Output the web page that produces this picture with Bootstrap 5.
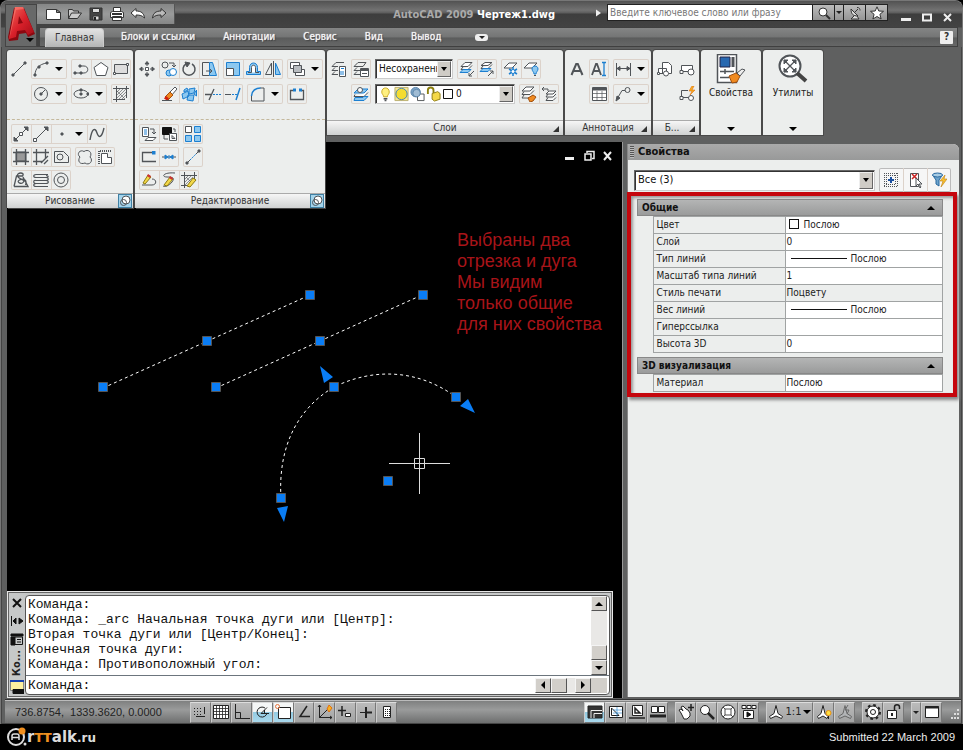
<!DOCTYPE html>
<html lang="ru">
<head>
<meta charset="utf-8">
<meta name="viewport" content="width=device-width, initial-scale=1">
<title>AutoCAD 2009 Чертеж1.dwg</title>
<link href="https://cdn.jsdelivr.net/npm/bootstrap@5.3.0/dist/css/bootstrap.min.css" rel="stylesheet">
<style>
:root{--ui:"DejaVu Sans Condensed","DejaVu Sans",sans-serif;--edge:#3c3c3c;--paper:#eceeed}
body{background:#000;font:10px/14px var(--ui);color:#222}
button{color:inherit;font:inherit;padding:0;border:0;background:none}
svg{display:block;flex:none}
.ic{width:16px;height:16px;fill:none;stroke:#505458;stroke-width:1}
.ic .b{stroke:#1c7fd0}.ic .bf{fill:#8cc8f0;stroke:#1c7fd0}.ic .d{fill:#505458}.ic .w{fill:#fff}.ic .g{fill:#b8bcc0}.ic .o{fill:#f08a20;stroke:#a05010}.ic .y{fill:#f4d848;stroke:#8c7a10}.ic .k{fill:#111;stroke:#111}
.caret{width:0;height:0;border:4px solid transparent;border-top:4px solid #000;border-bottom:0;display:block}
.caret-up{border-top:0;border-bottom:4px solid #000}
.app-window{background:#5f6060;border-radius:8px 8px 0 0;border:1px solid #777;border-bottom:0;box-shadow:inset 0 0 0 1px #444}
.app-head{background:linear-gradient(#525252,#727272 20%,#5c5c5c 12px,#3d3d3d 13px,#434343 26px,#5f6060 27px);padding:3px 4px 0;border-radius:7px 7px 0 0}
.app-button{width:32px;height:43px;background:#686969;border:1px solid #444;position:relative}
.app-button .caret{position:absolute;right:2px;bottom:4px}
.title-row{height:23px}
.quick{background:linear-gradient(#858686,#9a9b9b 50%,#858686);height:20px;padding:0 7px 0 9px;gap:5px;border-right:1px solid #555}
.quick .ic{stroke:#333}
.doc-title{font-weight:bold;color:#aaa;font-size:11px}
.doc-title b{color:#fff}
.search{border:1px solid #222;height:17px}
.search input{width:204px;border:0;height:15px;padding:0 2px;font:10px/14px var(--ui);border-radius:0;background:#fff;outline-offset:-1px}
.search input::placeholder{color:#777;opacity:1}
.search button{background:linear-gradient(#bbb,#959595);border-left:1px solid #222;width:22px;height:15px;display:grid;place-items:center}
.search button.slim{width:9px}
.search .ic{width:14px;height:14px;stroke:#333}
.win-btns{gap:7px;padding:0 3px 0 11px}
.win-btns .ic{width:14px;height:14px;stroke:#eee;stroke-width:2}
.tab-row{height:20px;background:linear-gradient(#848585,#747575 50%,#5b5c5c 55%,#666767);border:1px solid #404040;border-left-width:3px;padding:0 4px 0 5px}
.tab-row .nav-link{color:#f4f4f4;font:10px/18px var(--ui);padding:0 14px;text-shadow:0 0 1px #fff,1px 1px 1px #333}
.tab-row .nav-link.active{color:#333;background:linear-gradient(#e2e2e2,#b4b5b5);border-radius:4px 4px 0 0;padding:0 9px;text-shadow:none;margin-right:3px;border:1px solid #ccc;border-bottom:0}
.pill{width:13px;height:7px;background:#eee;border-radius:3px;margin-left:20px;display:grid;place-items:center}
.pill .caret,.slim .caret{border-width:3px 3px 0;border-top-color:#222}
.help{width:13px;height:13px;background:#eee;color:#333;font-weight:bold;line-height:12px;border-radius:1px}
.ribbon{padding:3px 6px 7px;gap:2px}
.panel{background:var(--paper);border-radius:3px 3px 0 0;position:relative;min-height:85px;box-shadow:0 0 0 1px #4a4a4a}
.panel-body{padding:9px 2px 0 4px;display:flex;flex-direction:column;gap:5px}
.trow{display:flex;gap:4px}
.trow.ind{padding-left:20px}
.tgroup{display:flex;box-shadow:inset 0 0 0 1px #dcd2ca;border-radius:2px}
.tool{width:20px;height:20px;display:grid;place-items:center;flex:none}
.tool.plain{width:16px}
.tool.more{width:16px}
.tgroup .tool+.tool:not(.more){box-shadow:inset 1px 0 #dcd2ca}
.panel-title{height:15px;border-top:1px solid #aaa;background:linear-gradient(#f6f6f6,#cfd1d1);display:flex;align-items:center;justify-content:center;color:#333;position:relative}
.corner{position:absolute;right:4px;bottom:3px;width:0;height:0;border:3px solid #333;border-left-color:transparent;border-top-color:transparent}
.flyout{position:absolute;top:69px;left:0;right:0;background:var(--paper);z-index:5;box-shadow:1px 1px 0 #444,-1px 0 0 #4a4a4a}
.flyout .panel-body{padding-top:4px;padding-bottom:3px;gap:3px;border-top:1px dashed #c4b89c}
.pin{position:absolute;right:1px;top:0;width:14px;height:14px;background:#a4d4ec;border:1px solid #3f80a4}
.pin .ic{width:12px;height:12px}
.wide-layers{width:236px}
.wide-blocks{width:46px}
.big{width:60px;color:#222}
.big .ic{width:32px;height:32px}
.combo{display:flex;align-items:center;background:#fff;border:1px solid #666;border-right-color:#ccc;border-bottom-color:#ccc;height:20px;padding:1px;box-shadow:inset 1px 1px #333}
.combo select{appearance:none;border:0;background:none;flex:1;min-width:0;font:10px/14px var(--ui);color:#111;padding:0 0 0 2px;outline-offset:-1px}
.drop{width:14px;align-self:stretch;background:#cfccc6;border:1px solid;border-color:#eee #666 #666 #eee;display:grid;place-items:center;flex:none}
.drop .caret{border-width:4px 3px 0}
.combo-a{width:78px}.combo-b{width:140px}
.combo-b .ic{margin-left:1px;width:15px}
.combo-b .ic.sq{width:12px}
.work{padding:0 3px 0 6px;min-height:0}
.drawing{background:#000;border-right:1px solid #999}
.canvas{min-height:300px;overflow:hidden;position:relative}
.sheet{position:absolute;inset:0;width:100%;height:100%}
.note{position:absolute;left:450px;top:88px;font:18px/21px "Liberation Sans",Arial,sans-serif;color:#a81419}
.doc-btns{position:absolute;right:7px;top:7px;gap:5px;display:flex}
.doc-btns .ic{width:14px;height:14px;stroke:#eee;stroke-width:2}
.command{background:#c6c8c8;border:1px solid #e8e8e8;box-shadow:inset 0 0 0 1px #666;margin-right:9px;padding:3px 2px 2px 2px;height:107px}
.cmd-side{width:14px;gap:4px;padding:1px 0}
.cmd-side .ic{width:14px;height:14px;stroke:#111}
.cmd-side span{writing-mode:vertical-rl;transform:rotate(180deg);font-weight:bold;font-size:11px;line-height:14px}
.cmd-pane{background:#fff;border:1px solid #555;border-radius:4px;margin-left:1px;overflow:hidden}
.cmd-log,.cmd-line{font:13px/15px "Liberation Mono","Courier New",monospace;color:#111}
.cmd-log{padding:1px 2px 0;white-space:pre-wrap;flex:1;margin:0;overflow:hidden}
.cmd-line label{padding-left:2px}
.cmd-line input{border:0;min-width:0;flex:1;height:18px;padding:0;outline-offset:-1px}
.cmd-end{margin-right:2px}
.sb{width:16px;height:15px;background:#d2cfca;border:1px solid;border-color:#f4f4f4 #555 #555 #f4f4f4;display:grid;place-items:center;flex:none}
.track{background:#e9e8e6}
.sb .l{transform:rotate(90deg)}.sb .r{transform:rotate(-90deg)}
.side{flex:0 0 332px;background:var(--paper);border-radius:0 6px 0 0;margin:2px 0 1px 4px;border-left:1px solid #888}
.side-title{height:16px;background:linear-gradient(#aaa,#989999);border-radius:0 6px 0 0;font-size:11px;font-weight:bold;color:#111;gap:4px;padding-left:2px}
.grab{width:4px;height:12px;background:repeating-linear-gradient(#555 0 1px,#bbb 1px 2px)}
.picker{padding:8px 8px 0 6px;gap:4px}
.picker .combo{flex:1;height:21px}
.picker select{font-size:11px}
.picker .tgroup{background:#f6f6f6;box-shadow:inset 0 0 0 1px #bbb}
.picker .tool{width:24px;height:24px}
.framed{border:4px solid #c5060d;margin:0 2px 0 -1px;padding:3px 10px 1px 6px;box-shadow:2px 3px 3px #888,inset 2px 2px 3px #999}
.grp{width:100%;height:17px;background:linear-gradient(#b4b5b5,#9a9b9b);border:1px solid #888;font-weight:bold;color:#111;display:flex;align-items:center;justify-content:space-between;padding:0 7px 0 4px}
.props{width:100%;border-collapse:collapse;table-layout:fixed;margin-bottom:4px}
.props:last-child{margin-bottom:0}
.props th,.props td{height:17px;padding:0 3px;border:1px solid #a0a3a3;font-weight:normal;line-height:14px;white-space:nowrap;vertical-align:middle}
.props .gut{border:0;width:16px;padding:0}
.props th{width:132px;color:#222}
.props td:not(.gut):not(.ro){background:#fff}
.props td:last-child{padding:0 1px}
.sw{display:inline-block;width:10px;height:10px;border:1px solid #111;background:#fff;margin:0 5px 0 2px;vertical-align:-1px}
.ln{display:inline-block;width:56px;border-top:1px solid #111;margin:0 4px;vertical-align:3px}
.status{height:24px;background:linear-gradient(#7f8080,#9a9b9b 40%,#6d6e6e);border-top:1px solid #bbb;border-bottom:1px solid #444;box-shadow:0 -1px #333;margin:2px 1px 0 4px}
.coords{font:11px/20px "Liberation Sans",Arial,sans-serif;color:#222;width:185px;padding-left:10px;white-space:pre}
.toggles{width:207px}
.sbtn{flex:1 0 0;height:21px;background:linear-gradient(#bbb,#a2a3a3);border:1px solid;border-color:#ddd #777 #777 #ccc;display:flex;align-items:center;justify-content:center}
.sbtn .ic,.sset .ic{stroke:#222}
.sbtn.on{background:linear-gradient(#f4f6f6 45%,#94cbe2 50%,#a8d8ec)}
.sset{display:flex}
.sset .sbtn{flex:none;width:21px}
.sset .sbtn.scale{width:47px;gap:2px;font:11px/18px var(--ui)}
.sset .sbtn.slim{width:10px}
.rset{gap:7px}
.foot{height:26px;color:#eee;padding:0 8px 0 7px;font:11px/26px "Liberation Sans",Arial,sans-serif}
.brand{font:bold 15px/24px "DejaVu Sans",sans-serif;color:#ddd;text-decoration:none}
.brand i{color:#f09020;font-style:normal}
.brand small{font-size:12px}
</style>
<script src="https://cdn.jsdelivr.net/npm/bootstrap@5.3.0/dist/js/bootstrap.bundle.min.js"></script>
</head>
<body class="min-vh-100 d-flex flex-column">
<div class="app-window d-flex flex-column flex-grow-1">
<header class="app-head d-flex">
 <button class="app-button" aria-label="Меню">
  <svg width="30" height="38" viewBox="0 0 30 38"><defs><linearGradient id="ra" x2="1" y2="1"><stop stop-color="#f4685c"/><stop offset=".5" stop-color="#d8202a"/><stop offset="1" stop-color="#a00c16"/></linearGradient></defs><path d="M8 1l-6 29 1 4 9-1 1-6 7-1 2 4 7-3L18 1z" fill="#8c0810"/><path fill-rule="evenodd" d="M9 0l8 0L28 25l-6 3-3-5-8 1-1 6-7 2zM13 9l-1 8 5-1z" fill="url(#ra)"/><path d="M9 0h8l1 2-8 1-6 26-1 3z" fill="#ff8a7c" opacity=".5"/></svg>
  <span class="caret"></span></button>
 <div class="flex-grow-1">
  <div class="title-row d-flex">
   <div class="quick d-flex align-items-center">
    <button aria-label="Создать"><svg class="ic" viewBox="0 0 16 16"><path class="w" d="M.5 3.500h10l4 3v7H.5zM10.500 3.500v3h4"/></svg></button>
    <button aria-label="Открыть"><svg class="ic" viewBox="0 0 16 16"><path fill="#ccc" d="M1.500 12.500v-9h4l1 1.500h5v2M1.500 12.500l3-5.500h10l-4 5.500z"/></svg></button>
    <button aria-label="Сохранить"><svg class="ic" viewBox="0 0 16 16"><path d="M2 2h12v12H2z" fill="#444"/><path fill="#ddd" d="M4.500 2.500h7v4h-7zM5 10h6v4H5z"/><path d="M7 11v3" stroke="#222" stroke-width="2"/></svg></button>
    <button aria-label="Печать"><svg class="ic" viewBox="0 0 16 16"><path class="w" d="M4.500 1.500h7v4h-7zM1.500 6.500l2-1h9l2 1v5h-13zM3.500 10.500h9v4h-9z"/><path d="M3 8h10" stroke-width="2"/></svg></button>
    <button aria-label="Отменить"><svg class="ic" viewBox="0 0 16 16"><path class="w" d="M1 7l5-4.500V5c5 0 8 2 8.500 7C12 9.500 10 9 6 9v2.500z"/></svg></button>
    <button aria-label="Повторить"><svg class="ic" viewBox="0 0 16 16"><path fill="#bbb" d="M15 7l-5-4.500V5C5 5 2 7 1.500 12 4 9.500 6 9 10 9v2.500z"/></svg></button>
   </div>
   <div class="doc-title ms-auto pt-1 pe-4 me-3">AutoCAD 2009 <b>Чертеж1.dwg</b></div>
   <svg width="12" height="18"><path d="M1 5.500v7l5-3.500z" fill="#eee"/></svg>
   <div class="search d-flex">
    <input type="text" aria-label="Поиск" placeholder="Введите ключевое слово или фразу">
    <button aria-label="Найти"><svg class="ic" viewBox="0 0 14 14"><circle class="w" cx="6" cy="6" r="4"/><path d="M9 9l4 4" stroke-width="2"/></svg></button>
    <button class="slim" aria-label="Область поиска"><span class="caret"></span></button>
    <button aria-label="Связь"><svg class="ic" viewBox="0 0 14 14"><path fill="#ddd" d="M3 3c0 5 2 7 7 7zM6 10l-3 3h8l-2-3M7 6l3-3M9 1.500c2 0 3 1 3 3"/></svg></button>
    <button aria-label="Избранное"><svg class="ic" viewBox="0 0 14 14"><path class="w" d="M7 .8l1.800 4.200 4.700.3-3.600 3 1.200 4.700L7 10.500 2.900 13l1.200-4.700-3.600-3L5.200 5z"/></svg></button>
   </div>
   <div class="win-btns d-flex pt-1">
    <button aria-label="Свернуть"><svg class="ic" viewBox="0 0 14 14"><path d="M2 8.500h10" stroke-width="3"/></svg></button>
    <button aria-label="Развернуть"><svg class="ic" viewBox="0 0 14 14"><path d="M3 3.500h8v6H3z"/></svg></button>
    <button aria-label="Закрыть"><svg class="ic" viewBox="0 0 14 14"><path d="M3 3l7 7M10 3l-7 7" stroke-width="2"/></svg></button>
   </div>
  </div>
  <nav class="tab-row nav d-flex flex-nowrap align-items-center">
   <a class="nav-link active" href="#">Главная</a><a class="nav-link" href="#">Блоки и ссылки</a><a class="nav-link" href="#">Аннотации</a><a class="nav-link" href="#">Сервис</a><a class="nav-link" href="#">Вид</a><a class="nav-link" href="#">Вывод</a>
   <button class="pill" aria-label="Вид ленты"><span class="caret"></span></button>
   <button class="help ms-auto" aria-label="Справка">?</button>
  </nav>
 </div>
</header>

<section class="ribbon d-flex">
 <div class="panel">
  <div class="panel-body">
   <div class="trow"><button class="tool plain" aria-label="Отрезок"><svg class="ic" viewBox="0 0 16 16"><path d="M2 14L14 2"/><path class="d" d="M1 13h2v2H1zM13 1h2v2h-2z"/></svg></button>
    <div class="tgroup"><button class="tool" aria-label="Дуга"><svg class="ic" viewBox="0 0 16 16"><path d="M2 14C2 8 6 3 14 2"/><path class="d" d="M1 13h2v2H1zM5 5h2v2H5zM13 1h2v2h-2z"/></svg></button><button class="tool more" aria-label="Ещё"><span class="caret"></span></button></div>
    <div class="tgroup"><button class="tool" aria-label="Полилиния"><svg class="ic" viewBox="0 0 16 16"><path d="M3 12h8c5 0 5-7 0-7H8"/><path class="d" d="M1 11h2v2H1zM7 11h2v2H7zM6 4h2v2H6z"/></svg></button><button class="tool" aria-label="Многоугольник"><svg class="ic" viewBox="0 0 16 16"><path class="w" d="M8 1.500l7 5-2.500 8h-9L1 6.500z"/></svg></button><button class="tool" aria-label="Прямоугольник"><svg class="ic" viewBox="0 0 16 16"><path fill="#ddd" d="M1.500 3.500h13v9h-13z"/><path class="w" d="M.5 11.500h2v2h-2zM13.500 2.500h2v2h-2z"/></svg></button></div></div>
   <div class="trow ind">
    <div class="tgroup"><button class="tool" aria-label="Круг"><svg class="ic" viewBox="0 0 16 16"><circle cx="8" cy="8" r="6.500"/><path d="M8 8l4-4"/><path class="d" d="M7 7h2v2H7z"/></svg></button><button class="tool more" aria-label="Ещё"><span class="caret"></span></button></div>
    <div class="tgroup"><button class="tool" aria-label="Эллипс"><svg class="ic" viewBox="0 0 16 16"><ellipse cx="8" cy="8" rx="7" ry="4"/><path class="d" d="M7 7h2v2H7zM7 3h2v2H7zM14 7h2v2h-2z"/></svg></button><button class="tool more" aria-label="Ещё"><span class="caret"></span></button></div>
    <div class="tgroup"><button class="tool" aria-label="Штриховка"><svg class="ic" viewBox="0 0 16 16"><path d="M3.500 0v16M13.500 0v12M0 2.500h16M0 13.500h12"/><path d="M4 6l3-3M4 9l6-6M4 12l9-9M6 13l7-7M9 13l4-4M4 5l8 8" stroke-width=".6"/></svg></button></div></div>
  </div>
  <div class="flyout">
   <div class="panel-body">
    <div class="trow"><div class="tgroup"><button class="tool" aria-label="Прямая"><svg class="ic" viewBox="0 0 16 16"><path d="M1 15L15 1"/><path class="d" d="M11 1h4v4zM1 11v4h4z"/><path class="w" d="M6.500 6.500h3v3h-3z"/></svg></button><button class="tool" aria-label="Луч"><svg class="ic" viewBox="0 0 16 16"><path d="M2 14L15 1"/><path class="d" d="M11 1h4v4z"/><path class="w" d="M.5 12.500h3v3h-3z"/></svg></button><button class="tool" aria-label="Точка"><svg class="ic" viewBox="0 0 16 16"><path class="d" d="M8 7h2v2H8z"/></svg></button><button class="tool more" aria-label="Ещё"><span class="caret"></span></button><button class="tool" aria-label="Сплайн"><svg class="ic" viewBox="0 0 16 16"><path d="M1 14C3 2 6 1 8 7s5 4 7-5" stroke-width="1.400"/></svg></button></div></div>
    <div class="trow"><div class="tgroup"><button class="tool" aria-label="Градиент"><svg class="ic" viewBox="0 0 16 16"><path fill="#999" d="M3 3h10v9H3z"/><path d="M3.500 0v16M12.500 0v16M0 3.500h16M0 12.500h16" stroke-width="1.300"/></svg></button><button class="tool" aria-label="Контур"><svg class="ic" viewBox="0 0 16 16"><path d="M3.500 0v16M12.500 0v10M0 3.500h16M0 12.500h10M8 14l7-7M11 15l4-4" stroke-width="1.300"/></svg></button><button class="tool" aria-label="Область"><svg class="ic" viewBox="0 0 16 16"><path d="M1.500 2.500h9l5 5v6h-14z"/><circle cx="7" cy="8" r="3"/></svg></button></div>
    <div class="tgroup"><button class="tool" aria-label="Облако"><svg class="ic" viewBox="0 0 16 16"><path d="M3 8C-1 5 3 0 7 2.500c4-3 9 1 6 5.500 4 4-1 9-5 6-5 2-8-2-5-6z"/></svg></button><button class="tool" aria-label="Маскировка"><svg class="ic" viewBox="0 0 16 16"><path stroke-dasharray="1 1" stroke-width="2" d="M2 15V2h13"/><path class="w" d="M4.500 4.500h6v4h4v6h-10z"/></svg></button></div></div>
    <div class="trow"><div class="tgroup"><button class="tool" aria-label="Спираль 3D"><svg class="ic" viewBox="0 0 16 16"><path d="M1 14.500L3.500 4h6c3-4-6-4-5 0s8 3 6 6-8 0-4-2 8 0 6 5M10 5l5 9.500H1" stroke-width="1.300"/></svg></button><button class="tool" aria-label="Спираль"><svg class="ic" viewBox="0 0 16 16"><path d="M15 2.500H3c-3 0-3 3 0 3h10c3 0 3-2 0-2M3 8.500h10c3 0 3-3 0-3M3 8.500c-3-1-3 3 0 3h10c3 0 3-3 0-3M3 11.500c-3 0-3 3 0 3h12" stroke-width="1.200"/></svg></button><button class="tool" aria-label="Кольцо"><svg class="ic" viewBox="0 0 16 16"><circle cx="8" cy="8" r="7"/><circle cx="8" cy="8" r="3.500"/></svg></button></div></div>
   </div>
   <div class="panel-title">Рисование<button class="pin" aria-label="Закрепить"><svg class="ic" viewBox="0 0 12 12"><circle class="w" cx="7" cy="5" r="4"/><circle cx="4.500" cy="7.500" r="3"/></svg></button></div>
  </div>
 </div>

 <div class="panel">
  <div class="panel-body">
   <div class="trow"><button class="tool plain" aria-label="Перенести"><svg class="ic" viewBox="0 0 16 16"><path class="w" d="M6.500 6.500h3v3h-3z"/><path class="d" d="M8 .5l2 2.500H6zM8 15.500l2-2.500H6zM.5 8L3 6v4zM15.500 8L13 6v4z"/><path d="M8 3v2M8 11v2M3 8h2M11 8h2"/></svg></button>
    <div class="tgroup"><button class="tool" aria-label="Копировать"><svg class="ic" viewBox="0 0 16 16"><circle cx="4" cy="4" r="3"/><circle class="bf" cx="8" cy="12" r="3"/><circle class="b w" cx="12" cy="11" r="3.500"/><path d="M8 2h5v4M11 4l2 2 2-2"/></svg></button><button class="tool" aria-label="Повернуть"><svg class="ic" viewBox="0 0 16 16"><path d="M5 3a6 6 0 1 0 6 0" stroke-width="1.500"/><path class="d" d="M4 1l5 1-3 4z"/></svg></button><button class="tool" aria-label="Растянуть"><svg class="ic" viewBox="0 0 16 16"><path d="M8.500 14.500h-7v-13h7"/><path class="bf" d="M8.500 1.500h3l4 13h-7z"/><path d="M5 10h6M9 8l2 2-2 2"/></svg></button></div>
    <div class="tgroup"><button class="tool" aria-label="Масштаб"><svg class="ic" viewBox="0 0 16 16"><path class="bf" d="M1.500 1.500h13v13h-13z"/><path class="w" d="M1.500 7.500h7v7h-7z"/></svg></button><button class="tool" aria-label="Подобие"><svg class="ic" viewBox="0 0 16 16"><path class="bf" d="M1.500 13.500v-3h3v-4c0-6 8-6 8 0v4h3v3z"/><path class="w" d="M3 11.500h3.500v-5c0-3 4-3 4 0v5H14"/></svg></button><button class="tool" aria-label="Зеркало"><svg class="ic" viewBox="0 0 16 16"><path d="M6.500 2v11.500h-6zM8.500 0v16"/><path class="bf" d="M10.500 2v11.500h5z"/></svg></button></div>
    <div class="tgroup"><button class="tool" aria-label="Порядок"><svg class="ic" viewBox="0 0 16 16"><path class="w" d="M1.500 1.500h9v6h-9zM6.500 8.500h9v6h-9z"/><path class="g" d="M4.500 4.500h8v7h-8z"/></svg></button><button class="tool more" aria-label="Ещё"><span class="caret"></span></button></div></div>
   <div class="trow ind">
    <div class="tgroup"><button class="tool" aria-label="Стереть"><svg class="ic" viewBox="0 0 16 16"><path class="w" d="M14 1l2 2-6 7-3-2z"/><path class="o" d="M9 6l3 3-5 5-3-3z"/><path fill="#d02010" stroke="none" d="M5 10l3 2.500-2 2-3-2z"/><path d="M1 14.500h10"/></svg></button><button class="tool" aria-label="Разбить"><svg class="ic" viewBox="0 0 16 16"><path class="bf" d="M1 8l6-3 1 5-6 3zM8 3l6-1-1 5-5 1zM7 9h6l-1 6-6-1zM3 4l3-2 1 2-4 2zM13 8l2.500-4v6z"/></svg></button></div>
    <div class="tgroup"><button class="tool" aria-label="Обрезать"><svg class="ic" viewBox="0 0 16 16"><path d="M0 8.500h6M9 3L4 14" stroke-width="1.300"/><path class="b" d="M8 8.500h8" stroke-dasharray="2 1"/></svg></button><button class="tool" aria-label="Удлинить"><svg class="ic" viewBox="0 0 16 16"><path d="M0 8.500h6"/><path class="b" d="M7 8.500h5" stroke-dasharray="2 1"/><path class="b" d="M15 2l-4 12" stroke-width="1.500"/></svg></button></div>
    <div class="tgroup"><button class="tool" aria-label="Сопряжение"><svg class="ic" viewBox="0 0 16 16"><path d="M2.500 9v6h12.500v-13h-4"/><path class="b" d="M2.500 10c0-5 4-8 9-8" stroke-width="1.500"/></svg></button><button class="tool more" aria-label="Ещё"><span class="caret"></span></button></div>
    <div class="tgroup"><button class="tool" aria-label="Разорвать"><svg class="ic" viewBox="0 0 16 16"><path d="M4 4.500H1.500v9h13v-9H12" stroke-width="1.300"/><path d="M4 2.500h3v3H4zM10 2.500h3v3h-3z" fill="#1c7fd0" stroke="none"/></svg></button></div></div>
  </div>
  <div class="flyout">
   <div class="panel-body">
    <div class="trow"><div class="tgroup"><button class="tool" aria-label="Изменить пространство"><svg class="ic" viewBox="0 0 16 16"><path class="w" d="M1.500 1.500h6v9h-6z"/><path class="b" d="M3 4h3M3 6h3M3 8h3"/><path d="M9 3h4v5M11 6l2 2 2-2"/><path class="w" d="M7 11.500h8l-3 3H4z"/></svg></button><button class="tool" aria-label="Установить по слою"><svg class="ic" viewBox="0 0 16 16"><path class="k" d="M1.500 1.500h9v7h-9z"/><path class="w" d="M8.500 7.500h7v7h-7z"/><path d="M11 12.500v-3l3 3zM12 3h2v3M3 9v4h4"/></svg></button></div><div class="tgroup"><button class="tool" aria-label="Массив"><svg class="ic" viewBox="0 0 16 16"><path class="w" d="M.5.5h6v6h-6z"/><path class="bf" d="M9.500.5h6v6h-6zM.5 9.500h6v6h-6zM9.500 9.500h6v6h-6z"/></svg></button></div></div>
    <div class="trow"><div class="tgroup"><button class="tool" aria-label="Увеличить"><svg class="ic" viewBox="0 0 16 16"><path d="M11 3.500H1.500v9H15" stroke-width="1.300"/><path d="M11 2h3.500v3.500H11z" fill="#1c7fd0" stroke="none"/></svg></button><button class="tool" aria-label="Соединить"><svg class="ic" viewBox="0 0 16 16"><path d="M1 8h14"/><path class="b" d="M4 6l3 2-3 2zM12 6L9 8l3 2zM8 6v4" fill="#1c7fd0"/></svg></button></div><div class="tgroup"><button class="tool" aria-label="Разорвать в точке"><svg class="ic" viewBox="0 0 16 16"><path d="M2 14l3-3M11 5l3-3"/><path class="b" d="M5 11l6-6" stroke-dasharray="2 1"/><path class="d" d="M1 13h2v2H1zM13 1h2v2h-2z"/></svg></button></div></div>
    <div class="trow"><div class="tgroup"><button class="tool" aria-label="Правка полилинии"><svg class="ic" viewBox="0 0 16 16"><path d="M1 13h10c5 0 5-6 0-6"/><path class="y" d="M2 11l5-8 3 2-6 7z"/><path fill="#c33" stroke="none" d="M7 2l3 2-1 2-3-2z"/></svg></button><button class="tool" aria-label="Правка сплайна"><svg class="ic" viewBox="0 0 16 16"><path d="M14 1C2 0 0 5 6 5s8 1 5 5-7 5-9 4"/><path class="y" d="M3 13l6-8 3 2-6 7z"/><path fill="#c33" stroke="none" d="M9 4l3 2-1 2-3-2z"/></svg></button><button class="tool" aria-label="Правка штриховки"><svg class="ic" viewBox="0 0 16 16"><path d="M3.500 0v16M0 3.500h16M13.500 0v7M0 13.500h6"/><path d="M4 7l3-3M4 10l6-6M4 13l8-8M5 5l6 6" stroke-width=".6"/><path class="y" d="M6 14l6-8 3 2-6 7z"/></svg></button></div></div>
   </div>
   <div class="panel-title">Редактирование<button class="pin" aria-label="Закрепить"><svg class="ic" viewBox="0 0 12 12"><circle class="w" cx="7" cy="5" r="4"/><circle cx="4.500" cy="7.500" r="3"/></svg></button></div>
  </div>
 </div>

 <div class="panel wide-layers d-flex flex-column">
  <div class="panel-body flex-grow-1">
   <div class="trow"><button class="tool plain" aria-label="Диспетчер слоёв"><svg class="ic" viewBox="0 0 16 16"><path d="M1 5.500L5 1.500h8M1 5.500h6M1 9.500L4 6.500M1 9.500h6M1 13.500L4 10.500M1 13.500h6"/><path class="w" d="M8.500 5.500h6v10h-6z"/><path class="b" d="M10 7.500h3M10 10v4M12 10v4"/></svg></button>
    <div class="tgroup"><button class="tool" aria-label="Состояния слоёв"><svg class="ic" viewBox="0 0 16 16"><path d="M1 5.500L5 1.500h8l-3 4zM1 9.500L4 6.500M1 9.500h6M1 13.500L4 10.500M1 13.500h6"/><path class="w" d="M7.500 7.500h8v8h-8z"/><path d="M8 9h7" stroke-width="2"/><path d="M9 12.500h5"/></svg></button></div>
    <div class="combo combo-a"><select aria-label="Состояние слоя"><option>Несохраненное</option></select><span class="drop"><span class="caret"></span></span></div>
    <div class="tgroup"><button class="tool" aria-label="Изолировать"><svg class="ic" viewBox="0 0 16 16"><path class="w" d="M2 5.500l4-4h7l-4 4zM2 8.500L4 6M2 8.500h7l4-4"/><path class="bf" d="M1 11.500l3-3h8l-3 3z"/><path d="M15 10l-5 5M10 12v3h3"/></svg></button><button class="tool" aria-label="Отменить изоляцию"><svg class="ic" viewBox="0 0 16 16"><path class="w" d="M2 4.500l4-3h7l-4 3zM2 7.500L4 5M2 7.500h7l4-4"/><path class="bf" d="M1 10.500l3-3h8l-3 3z"/><path d="M9 15l5-5M11 10h3v3"/></svg></button></div>
    <div class="tgroup"><button class="tool" aria-label="Заморозить"><svg class="ic" viewBox="0 0 16 16"><path class="w" d="M1 7l5-5h8l-5 5z"/><path class="b" d="M10 6v9M6 8l8 5M14 8l-8 5" stroke-width="1.500"/><circle class="b w" cx="10" cy="10.500" r="2"/></svg></button><button class="tool" aria-label="Отключить"><svg class="ic" viewBox="0 0 16 16"><path class="w" d="M1 7l5-5h8l-5 5z"/><path class="bf" d="M9 8c0-4 6-4 6 0 0 2-2 3-2 5h-2c0-2-2-3-2-5z"/><path d="M11 14.500h2"/></svg></button></div></div>
   <div class="trow ind">
    <div class="tgroup"><button class="tool" aria-label="Сделать текущим"><svg class="ic" viewBox="0 0 16 16"><path class="bf" d="M1 7l4-4h10l-4 4z"/><circle class="w" cx="7" cy="4" r="2.500"/><path class="w" d="M1 10.500h10l4-4M1 10.500l1-2"/><path class="bf" d="M1 14.500h10l4-4h-4l-1 1H2z"/></svg></button></div>
    <div class="combo combo-b"><svg class="ic" viewBox="0 0 16 16"><path d="M4 6c0-6 8-6 8 0 0 2-2 3-2 5H6c0-2-2-3-2-5z" fill="#fff080" stroke="#c8a820"/><path d="M6 13h4M7 15h2" stroke-width="1.500"/></svg><svg class="ic" viewBox="0 0 16 16"><path class="y" stroke="none" d="M1 1h14v14H1z" opacity=".6"/><circle cx="8" cy="8" r="6" fill="#f4dc30" stroke="#3f7fb8"/></svg><svg class="ic" viewBox="0 0 16 16"><circle cx="6" cy="6" r="5" fill="#7ba4c8" stroke="#5b84a8"/><path class="w" d="M8 8h7v7H8z"/><circle cx="7" cy="7" r="4" fill="#a0bcd4" stroke="#5b84a8"/></svg><svg class="ic" viewBox="0 0 16 16"><path d="M2 8V4c0-4 6-4 6 0v3" stroke="#8c8010" stroke-width="2"/><path class="y" d="M6.500 7.500l6-2 2.500 2v6l-6 2-2.500-2z"/></svg><svg class="ic sq" viewBox="0 0 12 16"><path class="w" d="M1.500 3.500h9v9h-9z" stroke="#111"/></svg><select aria-label="Слой"><option>0</option></select><span class="drop"><span class="caret"></span></span></div>
    <div class="tgroup"><button class="tool" aria-label="Копировать слой"><svg class="ic" viewBox="0 0 16 16"><path class="w" d="M1 5l4-4h8L9 5zM1 8.500h8l4-4M1 8.500l2-3M1 12h8l3-3M1 12l2-3"/><path class="o" d="M7 12l5-3 3 2-3 4-3 1z"/></svg></button><button class="tool" aria-label="Предыдущий слой"><svg class="ic" viewBox="0 0 16 16"><path d="M1 3h6v2M3 1L1 3l2 2"/><path class="w" d="M5 8l3-3h7l-3 3zM5 11h7l3-3M5 11l2-3M5 14.500h7l3-3M5 14.500l2-3"/></svg></button></div></div>
  </div>
  <div class="panel-title">Слои<span class="corner"></span></div>
 </div>

 <div class="panel d-flex flex-column">
  <div class="panel-body flex-grow-1">
   <div class="trow"><button class="tool plain" aria-label="Многострочный текст"><svg class="ic" viewBox="0 0 16 16"><path d="M2.500 14L7.200 3h1.600l4.700 11M4.500 10h7" stroke-width="2"/></svg></button><div class="tgroup"><button class="tool" aria-label="Однострочный текст"><svg class="ic" viewBox="0 0 16 16"><path d="M1 14L5 3h1l4 11M3 10h5" stroke-width="1.800"/><path class="b" d="M11 1.500h4M13 2v12M11 14.500h4" stroke-width="1.300"/></svg></button></div>
    <div class="tgroup"><button class="tool" aria-label="Размер"><svg class="ic" viewBox="0 0 16 16"><path d="M1.500 2v13M15.500 2v13M2 7.500h13"/><path class="d" d="M2 7.500l3-2v4zM15 7.500l-3-2v4z"/></svg></button><button class="tool more" aria-label="Ещё"><span class="caret"></span></button></div></div>
   <div class="trow ind"><div class="tgroup"><button class="tool" aria-label="Таблица"><svg class="ic" viewBox="0 0 16 16"><path class="w" d="M1.500 1.500h14v13h-14z"/><path d="M2 3h13" stroke-width="3"/><path d="M2 7.500h13M2 11.500h13M6 5v10M11 5v10" stroke-width=".7"/></svg></button></div>
    <div class="tgroup"><button class="tool" aria-label="Выноска"><svg class="ic" viewBox="0 0 16 16"><circle cx="12.500" cy="4" r="2.500"/><path d="M10 4.500H7L2 13"/><path class="d" d="M1 15l1-5 3 2z"/></svg></button><button class="tool more" aria-label="Ещё"><span class="caret"></span></button></div></div>
  </div>
  <div class="panel-title">Аннотация<span class="corner"></span></div>
 </div>

 <div class="panel wide-blocks d-flex flex-column">
  <div class="panel-body flex-grow-1">
   <div class="trow"><button class="tool plain" aria-label="Вставить"><svg class="ic" viewBox="0 0 16 16"><path class="w" d="M5.500 1.500h6l3 3v8h-9zM1.500 7.500h8v5h-8z"/><circle class="w" cx="9" cy="12.500" r="2.500"/><path class="w" d="M.5 11.500h2v2h-2z"/></svg></button><button class="tool" aria-label="Создать блок"><svg class="ic" viewBox="0 0 16 16"><path class="w" d="M2.500 4.500h11v6h-11z"/><circle class="w" cx="12" cy="11" r="3"/><path class="w" d="M1 9.500h3v3H1z"/></svg></button></div>
   <div class="trow ind"><button class="tool" aria-label="Редактор блоков"><svg class="ic" viewBox="0 0 16 16"><path d="M9 4.500H2.500v7h10"/><circle class="w" cx="12" cy="12" r="2.500"/><path class="w" d="M1 10.500h3v3H1z"/><path d="M13 0l-3 5h3l-2 4 5-5h-3l2-4z" fill="#f8b020" stroke="#e07010" stroke-width=".6"/></svg></button></div>
  </div>
  <div class="panel-title"><span class="pe-2">Б...</span><span class="corner"></span></div>
 </div>

 <button class="panel big d-flex flex-column align-items-center pt-1"><svg class="ic" viewBox="0 0 32 32"><path class="w" d="M2.500.5h19v28h-19z" stroke-width="1.500"/><path d="M5 3h10v10H5z" fill="#2868b0" stroke="#224"/><path d="M18 3v10" stroke-width="3"/><path d="M5 17.500h14M10 15v5M5 23.500h9" stroke-width="1.500"/><path class="o" d="M14 22l7-3 4 3-3 6-5 1z"/><path d="M22 19l5-4 3 1-5 6z" fill="#eee"/></svg><span>Свойства</span><span class="caret mt-auto mb-1"></span></button>
 <button class="panel big d-flex flex-column align-items-center pt-1"><svg class="ic" viewBox="0 0 32 32"><circle class="w" cx="13" cy="12" r="10.500" stroke-width="2"/><path d="M7 6l12 12M19 6L7 18" stroke-width="1.300"/><path class="d" d="M7 6h4l-4 4zM19 6v4l-4-4zM7 18v-4l4 4zM19 18h-4l4-4z"/><path d="M20 19l9 8" stroke="#444" stroke-width="4"/></svg><span>Утилиты</span><span class="caret mt-auto mb-1"></span></button>
</section>

<main class="work d-flex flex-grow-1">
 <section class="drawing d-flex flex-column flex-grow-1">
  <div class="canvas flex-grow-1">
   <svg class="sheet" role="img" aria-label="Чертёж">
    <g fill="none" stroke="#fff" stroke-dasharray="3 3"><path d="M96 246L303 153M209 246L415 153M274 356C271 308 288 268 327 245C368 225 412 228 449 255"/></g>
    <g fill="#0a7df5" stroke="#555"><path d="M91.500 240.500h9v9h-9zM195.500 194.500h9v9h-9zM298.500 148.500h9v9h-9zM204.500 240.500h9v9h-9zM308.500 194.500h9v9h-9zM411.500 148.500h9v9h-9zM322.500 240.500h9v9h-9zM444.500 250.500h9v9h-9zM269.500 351.500h9v9h-9zM376.500 334.500h9v9h-9z"/></g>
    <g fill="#0a7df5"><path d="M313 224l13 11-9 6zM453 264l8-7 7 14zM270 366l11-2-4 16z"/></g>
    <g fill="none" stroke="#ddd"><path d="M412.500 291v61M382 321.500h61M407.500 316.500h10v10h-10z"/></g>
   </svg>
   <div class="note">Выбраны два<br>отрезка и дуга<br>Мы видим<br>только общие<br>для них свойства</div>
   <div class="doc-btns"><button aria-label="Свернуть чертёж"><svg class="ic" viewBox="0 0 14 14"><path d="M2 9.500h9" stroke-width="3"/></svg></button><button aria-label="Восстановить чертёж"><svg class="ic" viewBox="0 0 14 14"><path d="M5 4V2.500h7v7h-2M3 5h6v6H3z" stroke-width="1.500"/></svg></button><button aria-label="Закрыть чертёж"><svg class="ic" viewBox="0 0 14 14"><path d="M3 3l7 8M10 3l-7 8"/></svg></button></div>
  </div>
  <div class="command d-flex">
   <div class="cmd-side d-flex flex-column align-items-center">
    <button aria-label="Закрыть"><svg class="ic" viewBox="0 0 14 14"><path d="M3 3l8 8M11 3l-8 8" stroke-width="2"/></svg></button>
    <button aria-label="Автоскрытие"><svg class="ic" viewBox="0 0 14 14"><path class="k" d="M1.500 2v10M3 7h3M6 4v6L3 7zM9 4v6l4-3z"/></svg></button>
    <button aria-label="Свойства окна"><svg class="ic" viewBox="0 0 14 14"><path class="k" d="M1 2h12v2H1zM1 5h4v8H1z"/><path d="M5 5h7.500v7.500H5M7 7.500h4M7 10h4"/></svg></button>
    <span>Ко...</span>
    <svg class="ic mt-auto" viewBox="0 0 14 14"><path fill="#fff0a0" stroke="#888" d="M.5 1.500h13v9H.5z"/><path stroke="#1840b0" stroke-width="2" d="M0 1h14"/><path class="k" d="M3 9.500h11v4H3z"/></svg>
   </div>
   <div class="cmd-pane d-flex flex-column flex-grow-1">
    <div class="d-flex flex-grow-1 border-bottom border-secondary">
     <pre class="cmd-log">Команда:
Команда: _arc Начальная точка дуги или [Центр]:
Вторая точка дуги или [Центр/Конец]:
Конечная точка дуги:
Команда: Противоположный угол:</pre>
     <div class="track cmd-end d-flex flex-column"><button class="sb" aria-label="Вверх"><span class="caret caret-up"></span></button><span class="sb mt-auto"></span><button class="sb" aria-label="Вниз"><span class="caret"></span></button></div>
    </div>
    <div class="cmd-line d-flex align-items-center"><label for="cmd">Команда:</label><input id="cmd" type="text"><div class="track d-flex"><button class="sb" aria-label="Влево"><span class="caret l"></span></button><span class="sb me-2"></span><button class="sb" aria-label="Вправо"><span class="caret r"></span></button></div><span class="sb cmd-end border-0"></span></div>
   </div>
  </div>
 </section>

 <aside class="side">
  <div class="side-title d-flex align-items-center"><span class="grab"></span>Свойства</div>
  <div class="picker d-flex align-items-center">
   <div class="combo"><select aria-label="Выбор объектов"><option>Все (3)</option></select><span class="drop"><span class="caret"></span></span></div>
   <div class="tgroup"><button class="tool" aria-label="Добавить к набору"><svg class="ic" viewBox="0 0 16 16"><path stroke-dasharray="1 1" d="M1 1.500h14M1 14.500h14M1.500 1v14M14.500 1v14M3 3.500h10M3 12.500h10M3.500 3v10M12.500 3v10"/><path d="M8 5v6M5 8h6" stroke="#1c50a0" stroke-width="2"/></svg></button><button class="tool" aria-label="Выбрать объекты"><svg class="ic" viewBox="0 0 16 16"><path class="w" d="M3.500 1.500h8v13h-8z"/><path stroke="#c22" stroke-width="1.500" d="M5 2l5 5M10 2L5 7"/><path class="w" d="M9 6v8l2-2 2 4 1-1-2-3h3z"/></svg></button><button class="tool" aria-label="Быстрый выбор"><svg class="ic" viewBox="0 0 16 16"><path d="M1.500 3h10L8 8v6l-3-2V8z" fill="#6fa4cc" stroke="#2868a0"/><ellipse cx="6.500" cy="3" rx="5" ry="2" fill="#a8cce4" stroke="#2868a0"/><path d="M14 3l-5 6h3l-2 6 6-8h-3z" fill="#f8c030" stroke="#c08010" stroke-width=".6"/></svg></button></div>
  </div>
  <div class="framed">
   <button class="grp">Общие<span class="caret caret-up"></span></button>
   <table class="props">
    <tr><td class="gut"></td><th scope="row">Цвет</th><td><span class="sw"></span>Послою</td></tr>
    <tr><td class="gut"></td><th scope="row">Слой</th><td>0</td></tr>
    <tr><td class="gut"></td><th scope="row">Тип линий</th><td><span class="ln"></span>Послою</td></tr>
    <tr><td class="gut"></td><th scope="row">Масштаб типа линий</th><td>1</td></tr>
    <tr><td class="gut"></td><th scope="row">Стиль печати</th><td class="ro">Поцвету</td></tr>
    <tr><td class="gut"></td><th scope="row">Вес линий</th><td><span class="ln"></span>Послою</td></tr>
    <tr><td class="gut"></td><th scope="row">Гиперссылка</th><td></td></tr>
    <tr><td class="gut"></td><th scope="row">Высота 3D</th><td>0</td></tr>
   </table>
   <button class="grp">3D визуализация<span class="caret caret-up"></span></button>
   <table class="props"><tr><td class="gut"></td><th scope="row">Материал</th><td>Послою</td></tr></table>
  </div>
 </aside>
</main>

<div class="status d-flex align-items-center">
 <div class="coords">736.8754,  1339.3620, 0.0000</div>
 <div class="toggles d-flex">
  <button class="sbtn" aria-label="Шаг"><svg class="ic" viewBox="0 0 16 16"><path stroke-dasharray="1 2" d="M2 4.500h9M2 7.500h9M2 10.500h9"/><path d="M12.500 3v7M4 12.500h9"/></svg></button>
  <button class="sbtn" aria-label="Сетка"><svg class="ic" viewBox="0 0 16 16"><path class="w" d="M.5 1.500h15v13H.5z"/><path d="M3.500 1v14M6.500 1v14M9.500 1v14M12.500 1v14M0 4.500h16M0 7.500h16M0 10.500h16" stroke-width=".8"/></svg></button>
  <button class="sbtn" aria-label="Орто"><svg class="ic" viewBox="0 0 16 16"><path d="M1.500 0v14.500H16M1.500 8.500h5v6"/></svg></button>
  <button class="sbtn on" aria-label="Отслеживание"><svg class="ic" viewBox="0 0 16 16"><path d="M11 4a5 5 0 1 0 2 5M7 9.500h8M7 9.500l6-6M10.500 6v3"/></svg></button>
  <button class="sbtn on" aria-label="Привязка"><svg class="ic" viewBox="0 0 16 16"><path class="w" d="M3.500 3.500h12v11h-12z"/><circle cx="2.500" cy="2.500" r="2" style="stroke:#e8743c"/></svg></button>
  <button class="sbtn" aria-label="Объектное отслеживание"><svg class="ic" viewBox="0 0 16 16"><path d="M11 2L4 12.500h10" stroke-width="1.500"/></svg></button>
  <button class="sbtn" aria-label="ПСК"><svg class="ic" viewBox="0 0 16 16"><path d="M2.500 1v12.500H15M2 14l9-9M1 3l1.500-2L4 3M13 12l2 1.500-2 1.500"/><path fill="#f8b020" style="stroke:#e07010" d="M12 1l3 3-3 4-2-3z"/></svg></button>
  <button class="sbtn" aria-label="Динамический ввод"><svg class="ic" viewBox="0 0 16 16"><path d="M5 2v10M1 6.500h8" stroke-width="1.500"/><path class="w" d="M8.500 9.500h5v3h-5z"/></svg></button>
  <button class="sbtn" aria-label="Вес"><svg class="ic" viewBox="0 0 16 16"><path d="M2 8.500h12" stroke-width="1"/><path d="M8 3v11M8 8.500h6" stroke-width="2"/></svg></button>
  <button class="sbtn" aria-label="Быстрые свойства"><svg class="ic" viewBox="0 0 16 16"><path class="w" d="M4.500 2.500h7v11h-7z"/><path stroke-dasharray="1 1" d="M6 5.500h5M6 7.500h5M6 9.500h5M6 11.500h5"/></svg></button>
 </div>
 <div class="rset d-flex ms-auto align-items-center">
  <div class="sset"><button class="sbtn on" aria-label="Модель"><svg class="ic" viewBox="0 0 16 16"><path d="M1 2h14v12H1z" fill="#333"/><path style="stroke:#eee" d="M4 14V6.500h11M7 14V9.500h8"/></svg></button><button class="sbtn" aria-label="Лист"><svg class="ic" viewBox="0 0 16 16"><path class="w" d="M1.500 2.500h13v11h-13z"/><path d="M3.500 4v7.500H11z"/><path class="b" d="M9 3v10M5 6h9M5 9h9" stroke-width=".6"/></svg></button><button class="sbtn" aria-label="Лист 1"><svg class="ic" viewBox="0 0 16 16"><path class="w" d="M3.500 1.500h10v10h-10z"/><path d="M6 4v5h5zM0 14h16" stroke-width="1.500"/></svg></button><button class="sbtn" aria-label="Виды листов"><svg class="ic" viewBox="0 0 16 16"><path class="w" d="M1.500 2.500h6v6h-6zM8.500 2.500h6v6h-6z"/><path d="M0 12h16" stroke-width="3"/></svg></button></div>
  <div class="sset"><button class="sbtn" aria-label="Панорама"><svg class="ic" viewBox="0 0 16 16"><path class="w" d="M3 9L1 6l2-1 2 2-2-4 2-1 3 3 2 1 2 3v3l-3 3H6z"/><path d="M13 0v7M10 3.500h6" stroke-width="1.500"/></svg></button><button class="sbtn" aria-label="Зум"><svg class="ic" viewBox="0 0 16 16"><circle class="w" cx="6" cy="6" r="4.500"/><path d="M9 9l6 6" stroke-width="2.500"/></svg></button><button class="sbtn" aria-label="Штурвал"><svg class="ic" viewBox="0 0 16 16"><circle class="w" cx="8" cy="8" r="7"/><path d="M5 5h6v6H5zM5 5L3 3M11 5l2-2M11 11l2 2M5 11l-2 2" stroke-width=".8"/></svg></button><button class="sbtn" aria-label="Аниматор"><svg class="ic" viewBox="0 0 16 16"><path class="w" d="M1 1.500h4v3H1zM6 1.500h4v3H6zM11 1.500h4v3h-4zM2.500 6.500h10v8h-10z"/><path class="k" d="M6 8l4 2.500L6 13z"/></svg></button></div>
  <div class="sset"><button class="sbtn scale"><svg class="ic" viewBox="0 0 16 16"><path class="w" d="M8 1.500l2 8 4.500 3-1 2L8 12l-5.500 2.500-1-2L6 9.500z"/></svg>1:1<span class="caret"></span></button><button class="sbtn" aria-label="Видимость аннотаций"><svg class="ic" viewBox="0 0 16 16"><path class="w" d="M7 1.500l2 8 3 3-1 2L7 12l-4.500 2.500-1-2L5 9.500z"/><circle cx="12.500" cy="9" r="2.500" fill="#ffe040" style="stroke:#e89010"/><path d="M12.500 12v3"/></svg></button><button class="sbtn" aria-label="Автомасштаб"><svg class="ic" viewBox="0 0 16 16" opacity=".5"><path class="g" d="M8 1.500l2 8 4.500 3-1 2L8 12l-5.500 2.500-1-2L6 9.500zM11 1l-3 5h4l-2 4"/></svg></button></div>
  <div class="sset"><button class="sbtn" aria-label="Рабочее пространство"><svg class="ic" viewBox="0 0 16 16"><circle class="w" cx="8" cy="8" r="6"/><circle cx="8" cy="8" r="7" stroke-width="2" stroke-dasharray="2.700 2.800"/><circle cx="8" cy="8" r="2.500"/></svg></button><button class="sbtn" aria-label="Блокировка панелей"><svg class="ic" viewBox="0 0 16 16"><path d="M8.500 7V3c0-3 5-3 5 0v2" stroke-width="1.500"/><path class="w" d="M1.500 6.500h9v8h-9z"/><path d="M6 9v3" stroke-width="2"/></svg></button></div>
  <div class="sset"><button class="sbtn slim" aria-label="Меню строки"><span class="caret"></span></button><button class="sbtn" aria-label="Очистить экран"><svg class="ic" viewBox="0 0 16 16"><path class="w" d="M1.500 2.500h13v11h-13z"/><path d="M1 3.500h14" stroke-width="2"/></svg></button></div>
  <svg width="12" height="20"><path d="M9 7v12M6 11v8M3 15v4" stroke="#ddd" stroke-width="2" stroke-dasharray="2 2" fill="none"/></svg>
 </div>
</div>
</div>
<footer class="foot d-flex justify-content-between align-items-center">
 <a href="#" class="brand d-flex align-items-center"><svg width="20" height="20" viewBox="0 0 20 20"><circle cx="9" cy="10" r="8" fill="none" stroke="#ddd" stroke-width="2"/><path d="M5 13V9q0-2 2-2h3q2 0 2 2v4M5 10.500h7" fill="none" stroke="#ddd" stroke-width="1.500"/><circle cx="15" cy="4" r="3.500" fill="#f09020"/><circle cx="18" cy="17" r="1.500" fill="#ddd"/></svg><span>r<i>тт</i>alk<small>.ru</small></span></a>
 <span>Submitted 22 March 2009</span>
</footer>
</body>
</html>
